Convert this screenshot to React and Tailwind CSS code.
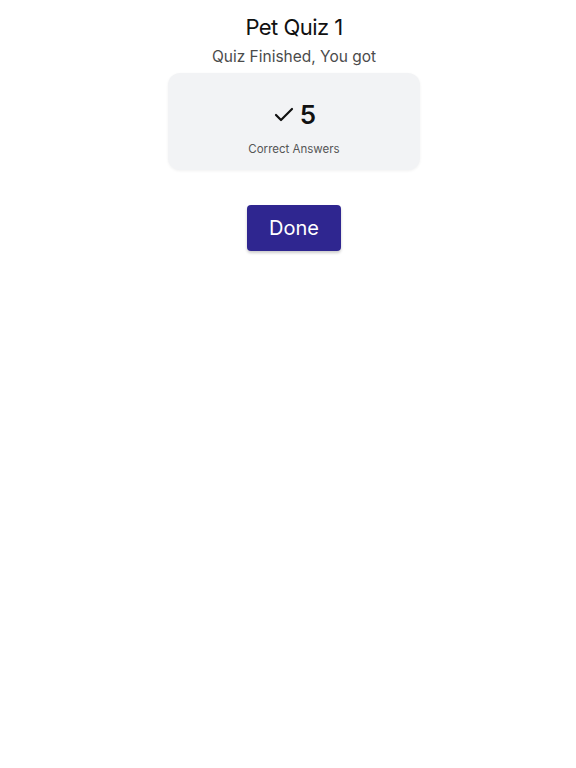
import { Check } from "lucide-react";

export default function App() {
  return (
    <div className="min-h-[768px] bg-white flex flex-col items-center pl-3 font-['Inter',sans-serif]">
      <h1 className="mt-[12px] text-[22px] leading-[30px] text-[#111] font-normal tracking-tight">Pet Quiz 1</h1>
      <p className="mt-[4px] text-[15.5px] leading-[22px] text-[#4b4b4b]">Quiz Finished, You got</p>
      <div className="mt-[5px] w-[252px] h-[97px] rounded-xl bg-[#f2f3f5] shadow-[0_1px_3px_rgba(0,0,0,0.06)] flex flex-col items-center">
        <div className="mt-[26px] flex items-center gap-[4px]">
          <Check className="w-[24px] h-[24px] text-[#111]" strokeWidth={2.2} />
          <span className="text-[26px] leading-[32px] font-semibold text-[#111]">5</span>
        </div>
        <span className="mt-[11px] text-[11.5px] leading-[14px] text-[#555]">Correct Answers</span>
      </div>
      <button className="mt-[35px] w-[94px] h-[46px] rounded-[4px] bg-[#2f2690] text-white text-[20px] shadow-[0_2px_3px_rgba(0,0,0,0.2)]">
        Done
      </button>
    </div>
  );
}
